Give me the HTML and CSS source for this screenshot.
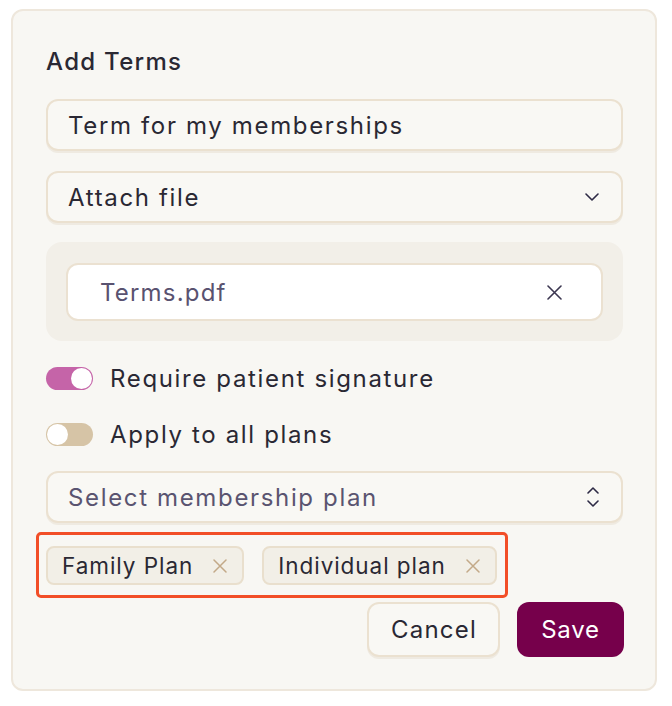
FILE: index.html
```html
<!DOCTYPE html>
<html lang="en">
<head>
<meta charset="utf-8">
<title>Add Terms</title>
<link rel="stylesheet" href="styles.css">
</head>
<body>
<div class="card">
  <h2 class="title">Add Terms</h2>
  <div class="field">Term for my memberships</div>
  <div class="field select">
    <span>Attach file</span>
    <svg class="chev" width="14" height="8" viewBox="0 0 14 8"><path d="M1 1l6 6 6-6" fill="none" stroke="#2d2a45" stroke-width="1.6" stroke-linecap="round" stroke-linejoin="round"/></svg>
  </div>
  <div class="file-area">
    <div class="file">
      <span>Terms.pdf</span>
      <svg width="15" height="15" viewBox="0 0 15 15"><path d="M1 1l13 13M14 1L1 14" fill="none" stroke="#3b3650" stroke-width="1.6" stroke-linecap="round"/></svg>
    </div>
  </div>
  <div class="toggle-row row-1">
    <span class="switch on"><span class="knob"></span></span>
    <span>Require patient signature</span>
  </div>
  <div class="toggle-row row-2">
    <span class="switch"><span class="knob"></span></span>
    <span>Apply to all plans</span>
  </div>
  <div class="field select placeholder">
    <span>Select membership plan</span>
    <svg width="12" height="20" viewBox="0 0 12 20"><path d="M1 6l5-5 5 5M1 14l5 5 5-5" fill="none" stroke="#2d2a45" stroke-width="1.6" stroke-linecap="round" stroke-linejoin="round"/></svg>
  </div>
  <div class="chips">
    <span class="chip">Family Plan
      <svg width="14" height="14" viewBox="0 0 14 14"><path d="M1 1l12 12M13 1L1 13" fill="none" stroke="#c3a988" stroke-width="1.5" stroke-linecap="round"/></svg>
    </span>
    <span class="chip">Individual plan
      <svg width="14" height="14" viewBox="0 0 14 14"><path d="M1 1l12 12M13 1L1 13" fill="none" stroke="#c3a988" stroke-width="1.5" stroke-linecap="round"/></svg>
    </span>
  </div>
  <div class="actions">
    <button class="btn cancel">Cancel</button>
    <button class="btn save">Save</button>
  </div>
</div>
</body>
</html>
```
FILE: styles.css
```css
* { box-sizing: border-box; }
html, body { margin: 0; background: #ffffff; }
body {
  font-family: Inter, "Liberation Sans", sans-serif;
  font-size: 24px;
  letter-spacing: 1.65px;
  color: #2a2833;
}
.card {
  margin: 9px 0 0 11px;
  width: 646px;
  height: 682px;
  background: #f8f7f3;
  border: 2px solid #eee7dc;
  border-radius: 12px;
  padding: 37px 32px 0 33px;
  display: flex;
  flex-direction: column;
}
.title {
  margin: 0 0 23px;
  font-size: 24px;
  font-weight: 500;
  line-height: 28px;
  letter-spacing: 1.3px;
  color: #2a2833;
}
.field {
  height: 52px;
  border: 2px solid #ebe1d0;
  border-radius: 12px;
  background: #f9f8f4;
  box-shadow: 0 2px 0 #efeae1;
  padding: 0 22px 0 20px;
  display: flex;
  align-items: center;
  justify-content: space-between;
  margin-bottom: 20px;
  flex-shrink: 0;
}
.select { margin-bottom: 19px; }
.placeholder { color: #5a5470; margin-bottom: 9px; }
.file-area {
  height: 99px;
  background: #f2efe8;
  border-radius: 16px;
  padding: 21px 20px 20px;
  flex-shrink: 0;
}
.file {
  height: 58px;
  background: #ffffff;
  border: 2px solid #ebe1d1;
  border-radius: 12px;
  padding: 0 39px 0 32px;
  display: flex;
  align-items: center;
  justify-content: space-between;
  color: #595270;
  letter-spacing: 1.2px;
}
.toggle-row {
  height: 32px;
  display: flex;
  align-items: center;
  gap: 17px;
  flex-shrink: 0;
}
.row-1 { margin-top: 21px; }
.row-2 { margin-top: 24px; margin-bottom: 21px; }
.switch {
  width: 47px;
  height: 23px;
  border-radius: 12px;
  background: #d6c4a6;
  padding: 1px;
  display: flex;
  flex-shrink: 0;
}
.switch .knob {
  width: 21px;
  height: 21px;
  border-radius: 50%;
  background: #ffffff;
}
.switch.on { background: #c564a8; justify-content: flex-end; }
.chips {
  align-self: flex-start;
  margin-left: -10px;
  border: 3px solid #f24e27;
  border-radius: 5px;
  padding: 11px 8px 10px 7px;
  display: flex;
  gap: 18px;
}
.chip {
  height: 39px;
  border: 2px solid #e9dfcd;
  background: #f2efe7;
  border-radius: 8px;
  padding: 0 15px 0 14px;
  display: flex;
  align-items: center;
  gap: 20px;
  font-size: 22.5px;
  letter-spacing: 0.95px;
}
.actions {
  margin-top: 4px;
  display: flex;
  justify-content: flex-end;
  gap: 17px;
  margin-right: -1px;
}
.btn {
  font: inherit;
  letter-spacing: 1.2px;
  height: 55px;
  border-radius: 12px;
  padding: 0 22px;
  cursor: pointer;
}
.cancel {
  width: 133px;
  background: #f9f8f4;
  border: 2px solid #ebe1d0;
  box-shadow: 0 2px 0 #efeae1;
  color: #2a2833;
}
.save {
  width: 107px;
  background: #76004b;
  border: none;
  color: #ffffff;
  letter-spacing: 0.8px;
}
```
